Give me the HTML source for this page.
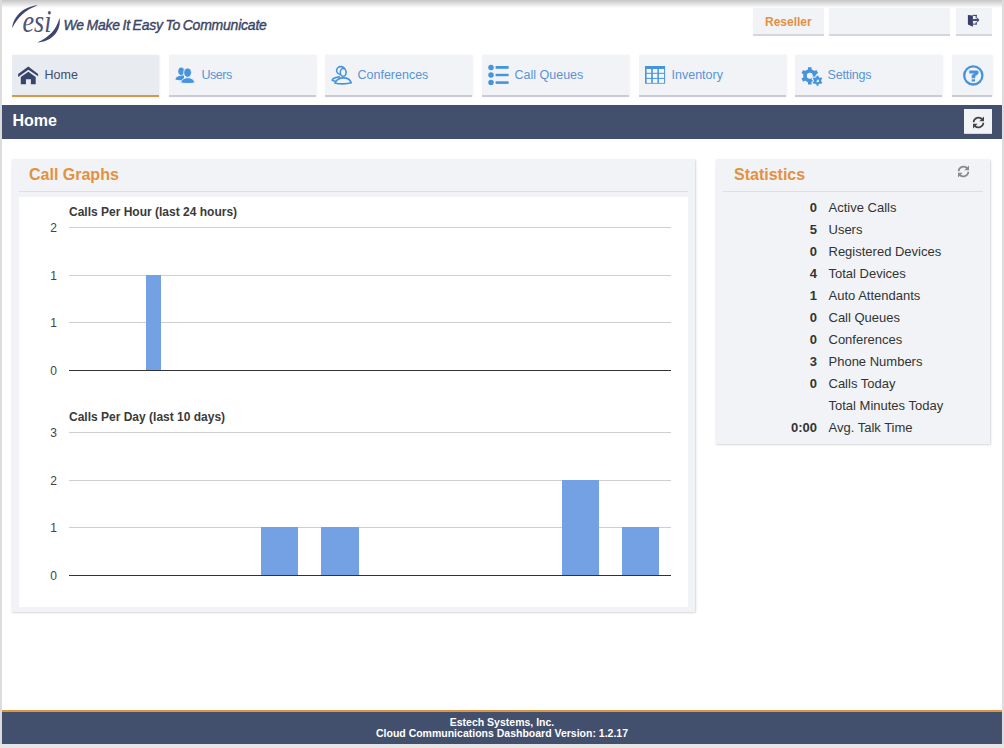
<!DOCTYPE html>
<html><head><meta charset="utf-8">
<style>
*{box-sizing:border-box;margin:0;padding:0}
html,body{width:1004px;height:748px;overflow:hidden;background:#fff;font-family:"Liberation Sans",sans-serif}
.a{position:absolute}
.t{position:absolute;white-space:nowrap;line-height:1}
/* frame */
#ftop{left:0;top:0;width:1004px;height:8px;background:linear-gradient(#c6c6c6,#fff)}
#fl{left:0;top:0;width:2px;height:748px;background:#dcdcdc}
#fr{left:1002px;top:0;width:2px;height:748px;background:#dcdcdc}
#fb{left:0;top:744px;width:1004px;height:4px;background:#e6e6e6}
/* top buttons */
.tb{position:absolute;top:8px;height:28px;background:#f1f3f6;border-bottom:2px solid #d3d6da}
/* nav */
.nv{position:absolute;top:55px;width:147px;height:42px;background:#f1f3f6;border-bottom:2px solid #c9ccd2;box-shadow:1px 0 2px rgba(0,0,0,.06)}
.nv.on{background:#e8ebf0;border-bottom-color:#d8984c}
.nv .t{left:32.5px;top:14px;font-size:12.5px;color:#5893d8}
.nv.on .t{color:#434c69}
.nv svg{position:absolute}
/* bar */
#hbar{left:2px;top:105px;width:1000px;height:34px;background:#42506e}
/* panels */
.pn{position:absolute;background:#f1f3f6;box-shadow:0.5px 1px 2px rgba(0,0,0,.16);border-radius:1px}
.ttl{position:absolute;font-weight:bold;font-size:16px;color:#e39140;white-space:nowrap;line-height:1}
.sep{position:absolute;height:1px;background:#dcdfe3}
.gl{position:absolute;left:69px;width:602px;height:1px;background:#cfcfcf}
.bl{position:absolute;left:69px;width:602px;height:1px;background:#333}
.yl{position:absolute;width:20px;text-align:right;font-size:12px;color:#444;line-height:1;left:37px}
.bar{position:absolute;background:#74a1e3}
.ct{position:absolute;left:69px;font-weight:bold;font-size:12px;color:#3a3a3a;white-space:nowrap;line-height:1}
.sr{position:absolute;left:716px;width:275px;height:22px;font-size:13px;color:#333;line-height:1}
.sr b{position:absolute;right:174px;top:0;font-weight:bold}
.sr span{position:absolute;left:112.5px;top:0;white-space:nowrap}
#foot{left:2px;top:710px;width:1000px;height:34px;background:#42506e;border-top:2px solid #e0963c}
#foot .t{left:0;width:1000px;text-align:center;color:#fff;font-weight:bold;font-size:10.5px}
</style></head><body>
<div id="ftop" class="a"></div>
<div id="fl" class="a"></div>
<div id="fr" class="a"></div>
<div id="fb" class="a"></div>

<!-- logo -->
<svg class="a" style="left:8px;top:2px" width="66" height="44" viewBox="0 0 66 44">
  <path d="M4.2 26 C 5 16, 14 4.5, 29.9 3.3 C 17 8, 9.5 15.5, 4.2 26 Z" fill="#3c4670"/>
  <path d="M51.4 15.8 C 54 29, 43 40, 29.3 40.6 C 40.5 35.5, 49 27.5, 51.4 15.8 Z" fill="#3c4670"/>
  <text x="14.5" y="29.6" font-family="Liberation Serif" font-style="italic" font-size="32" fill="#4a5478" textLength="29" lengthAdjust="spacingAndGlyphs">esi</text>
</svg>
<div class="t" style="left:63.5px;top:18px;font-size:14px;font-style:italic;color:#3c4668;letter-spacing:-0.22px;word-spacing:-1px;-webkit-text-stroke:0.4px #3c4668">We Make It Easy To Communicate</div>

<!-- top buttons -->
<div class="tb" style="left:753px;width:71px"><div class="t" style="left:12px;top:8px;font-size:12px;font-weight:bold;color:#e39140">Reseller</div></div>
<div class="tb" style="left:829px;width:121px"></div>
<div class="tb" style="left:956px;width:36px">
  <svg class="a" style="left:11px;top:6px" width="14" height="14" viewBox="0 0 14 14">
    <g fill="#383f6c">
    <path d="M0.9 0.9 L5.9 1.6 V12.7 L0.9 10.6 Z"/>
    <rect x="5.9" y="0.9" width="3.8" height="1"/>
    <rect x="8.7" y="0.9" width="1" height="3.6"/>
    <rect x="8.7" y="7.9" width="1" height="2.6"/>
    <rect x="5.9" y="9.6" width="3.8" height="1"/>
    <rect x="5.9" y="5.1" width="4.8" height="1.8"/>
    <path d="M10.2 3.6 L12.4 6 L10.2 8.4 Z"/>
    </g>
  </svg>
</div>

<!-- nav -->
<div class="nv on" style="left:12px">
  <svg style="left:6px;top:10.5px" width="21" height="19" viewBox="0 0 21 19">
    <path d="M0.1 8.1 L10.35 0.55 L20.1 8.1 L20.1 10.3 L10.35 3.75 L0.1 11 Z" fill="#38456b"/>
    <path d="M2.8 11 L10.35 5.7 L17.7 11 V18.2 H12.9 V13.2 H7.95 V18.2 H2.8 Z" fill="#38456b"/>
  </svg>
  <div class="t">Home</div>
</div>
<div class="nv" style="left:169px">
  <svg style="left:6px;top:5px" width="22" height="26" viewBox="0 0 22 26">
    <g fill="#4794de" stroke="#f1f3f6" stroke-width="1">
    <ellipse cx="6.2" cy="11.3" rx="2.9" ry="3.8" stroke="none"/>
    <path d="M0.4 19.2 C 0.8 16.6, 4 15.4, 9 15.4 V20.2 C 5 20.4, 1.2 20.2, 0.4 19.2 Z" stroke="none"/>
    <ellipse cx="12.6" cy="12.6" rx="3.9" ry="4.7"/>
    <path d="M5.3 22.7 C 6.5 19.3, 9.8 17.6, 12.8 17.6 C 15.8 17.6, 19 19.3, 20.2 22.7 C 17 23.8, 8.5 23.8, 5.3 22.7 Z"/>
    </g>
  </svg>
  <div class="t" style="letter-spacing:-0.5px">Users</div>
</div>
<div class="nv" style="left:325px">
  <svg style="left:6px;top:5px" width="22" height="26" viewBox="0 0 22 26">
    <g stroke="#4794de" stroke-width="1.6">
    <ellipse cx="9.9" cy="10.5" rx="4.3" ry="3.9" fill="none"/>
    <ellipse cx="12.2" cy="12.4" rx="2.9" ry="3.9" fill="#f1f3f6"/>
    <path d="M9 16.9 C 5 17.2, 1.8 18.4, 1.2 20.1 C 2 20.8, 3.5 21.3, 4.8 21.3" fill="none"/>
    <path d="M4 23 C 5.5 19.5, 9 17.9, 12.3 17.9 C 15.8 17.9, 19.2 19.8, 20.2 22.8 C 16 24.2, 8 24.2, 4 23 Z" fill="#f1f3f6"/>
    </g>
  </svg>
  <div class="t">Conferences</div>
</div>
<div class="nv" style="left:482px">
  <svg style="left:5px;top:9px" width="22" height="21" viewBox="0 0 22 21">
    <g fill="#4794de">
    <circle cx="4" cy="3.4" r="2.75"/>
    <circle cx="4" cy="11" r="2.75"/>
    <circle cx="4" cy="18.5" r="2.75"/>
    <rect x="8.6" y="2" width="13" height="2.8"/>
    <rect x="8.6" y="9.8" width="13" height="2.4"/>
    <rect x="8.6" y="17.3" width="13" height="2.6"/>
    </g>
  </svg>
  <div class="t">Call Queues</div>
</div>
<div class="nv" style="left:639px">
  <svg style="left:6px;top:11px" width="21" height="18" viewBox="0 0 21 18">
    <rect x="0" y="0" width="20.1" height="17.7" fill="#4794de"/>
    <g fill="#f3f6fa">
    <rect x="1.6" y="3" width="4.6" height="3.8"/><rect x="7.8" y="3" width="4.6" height="3.8"/><rect x="13.9" y="3" width="5.2" height="3.8"/>
    <rect x="1.6" y="7.8" width="4.6" height="4.1"/><rect x="7.8" y="7.8" width="4.6" height="4.1"/><rect x="13.9" y="7.8" width="5.2" height="4.1"/>
    <rect x="1.6" y="12.9" width="4.6" height="4"/><rect x="7.8" y="12.9" width="4.6" height="4"/><rect x="13.9" y="12.9" width="5.2" height="4"/>
    </g>
  </svg>
  <div class="t">Inventory</div>
</div>
<div class="nv" style="left:795px">
  <svg style="left:6px;top:11px" width="24" height="22" viewBox="0 0 24 22">
    <path fill-rule="evenodd" fill="#4794de" d="M7.00 3.45 L7.00 1.19 L10.60 1.19 L10.60 3.45 L11.37 3.72 L12.10 4.08 L12.78 4.54 L13.40 5.07 L15.36 3.93 L17.16 7.05 L15.20 8.18 L15.35 8.99 L15.40 9.80 L15.35 10.61 L15.20 11.42 L17.16 12.55 L15.36 15.67 L13.40 14.53 L12.78 15.06 L12.10 15.52 L11.37 15.88 L10.60 16.15 L10.60 18.41 L7.00 18.41 L7.00 16.15 L6.23 15.88 L5.50 15.52 L4.82 15.06 L4.20 14.53 L2.24 15.67 L0.44 12.55 L2.40 11.42 L2.25 10.61 L2.20 9.80 L2.25 8.99 L2.40 8.18 L0.44 7.05 L2.24 3.93 L4.20 5.07 L4.82 4.54 L5.50 4.08 L6.23 3.72 Z M11.80 9.80 A3.0 3.0 0 1 0 5.80 9.80 A3.0 3.0 0 1 0 11.80 9.80 Z"/>
    <path fill="none" stroke="#f1f3f6" stroke-width="2" stroke-linejoin="round" d="M15.45 11.15 L15.45 9.71 L17.55 9.71 L17.55 11.15 L17.96 11.30 L18.35 11.50 L18.71 11.74 L19.05 12.02 L20.30 11.30 L21.35 13.11 L20.10 13.84 L20.17 14.26 L20.20 14.70 L20.17 15.14 L20.10 15.56 L21.35 16.29 L20.30 18.10 L19.05 17.38 L18.71 17.66 L18.35 17.90 L17.96 18.10 L17.55 18.25 L17.55 19.69 L15.45 19.69 L15.45 18.25 L15.04 18.10 L14.65 17.90 L14.29 17.66 L13.95 17.38 L12.70 18.10 L11.65 16.29 L12.90 15.56 L12.83 15.14 L12.80 14.70 L12.83 14.26 L12.90 13.84 L11.65 13.11 L12.70 11.30 L13.95 12.02 L14.29 11.74 L14.65 11.50 L15.04 11.30 Z"/>
    <path fill-rule="evenodd" fill="#4794de" d="M15.45 11.15 L15.45 9.71 L17.55 9.71 L17.55 11.15 L17.96 11.30 L18.35 11.50 L18.71 11.74 L19.05 12.02 L20.30 11.30 L21.35 13.11 L20.10 13.84 L20.17 14.26 L20.20 14.70 L20.17 15.14 L20.10 15.56 L21.35 16.29 L20.30 18.10 L19.05 17.38 L18.71 17.66 L18.35 17.90 L17.96 18.10 L17.55 18.25 L17.55 19.69 L15.45 19.69 L15.45 18.25 L15.04 18.10 L14.65 17.90 L14.29 17.66 L13.95 17.38 L12.70 18.10 L11.65 16.29 L12.90 15.56 L12.83 15.14 L12.80 14.70 L12.83 14.26 L12.90 13.84 L11.65 13.11 L12.70 11.30 L13.95 12.02 L14.29 11.74 L14.65 11.50 L15.04 11.30 Z M18.05 14.70 A1.55 1.55 0 1 0 14.95 14.70 A1.55 1.55 0 1 0 18.05 14.70 Z"/>
  </svg>
  <div class="t" style="letter-spacing:-0.15px">Settings</div>
</div>
<div class="nv" style="left:952px;width:40px">
  <svg style="left:10px;top:9.5px" width="23" height="22" viewBox="0 0 23 22">
    <circle cx="11.3" cy="10.4" r="9.1" stroke="#4794de" stroke-width="2.3" fill="none"/>
    <path d="M7.3 5.4 H14.8 C16.2 5.4, 16.7 6.3, 16.6 7.4 C16.5 8.8, 15.6 9.7, 13.3 11 V13.2 H9.7 V10 L12.6 8.5 H7.3 Z" fill="#4794de"/>
    <rect x="9.7" y="14.3" width="3.3" height="2.2" fill="#4794de"/>
  </svg>
</div>

<!-- header bar -->
<div id="hbar" class="a">
  <div class="t" style="left:10.5px;top:7.5px;font-size:16px;font-weight:bold;color:#fff">Home</div>
  <div class="a" style="left:962px;top:4px;width:28px;height:25px;background:#f1f3f6;border-bottom:1px solid #d5d8dc">
    <svg class="a" style="left:8px;top:6.5px" width="13" height="13" viewBox="0 0 13 13">
      <path d="M1.6 6.2 A4.9 4.9 0 0 1 10.3 3.4" stroke="#444" stroke-width="1.7" fill="none"/>
      <path d="M12 0.6 V5.3 H7.3 Z" fill="#444"/>
      <path d="M11.4 6.8 A4.9 4.9 0 0 1 2.7 9.6" stroke="#444" stroke-width="1.7" fill="none"/>
      <path d="M1 12.4 V7.7 H5.7 Z" fill="#444"/>
    </svg>
  </div>
</div>

<!-- Call graphs panel -->
<div class="pn" style="left:12px;top:159px;width:683px;height:453px"></div>
<div class="ttl" style="left:29px;top:167px">Call Graphs</div>
<div class="sep" style="left:19px;top:191px;width:669px"></div>
<div class="a" style="left:19px;top:197px;width:669px;height:410px;background:#fff"></div>

<div class="ct" style="left:69px;top:206px">Calls Per Hour (last 24 hours)</div>
<div class="gl" style="top:227px"></div>
<div class="gl" style="top:275px"></div>
<div class="gl" style="top:322px"></div>
<div class="bar" style="left:146px;top:275px;width:15px;height:95px"></div>
<div class="bl" style="top:370px"></div>
<div class="yl" style="top:222px">2</div>
<div class="yl" style="top:270px">1</div>
<div class="yl" style="top:317px">1</div>
<div class="yl" style="top:365px">0</div>

<div class="ct" style="left:69px;top:411px">Calls Per Day (last 10 days)</div>
<div class="gl" style="top:432px"></div>
<div class="gl" style="top:480px"></div>
<div class="gl" style="top:527px"></div>
<div class="bar" style="left:261px;top:527px;width:37px;height:48px"></div>
<div class="bar" style="left:321px;top:527px;width:38px;height:48px"></div>
<div class="bar" style="left:562px;top:480px;width:37px;height:95px"></div>
<div class="bar" style="left:622px;top:527px;width:37px;height:48px"></div>
<div class="bl" style="top:575px"></div>
<div class="yl" style="top:427px">3</div>
<div class="yl" style="top:475px">2</div>
<div class="yl" style="top:522px">1</div>
<div class="yl" style="top:570px">0</div>

<!-- Statistics panel -->
<div class="pn" style="left:716px;top:159px;width:274px;height:284.5px"></div>
<div class="ttl" style="left:734px;top:167px">Statistics</div>
<svg class="a" style="left:956.5px;top:165px" width="13" height="13" viewBox="0 0 13 13">
  <path d="M1.6 6.2 A4.9 4.9 0 0 1 10.3 3.4" stroke="#8a8a8a" stroke-width="1.7" fill="none"/>
  <path d="M12 0.6 V5.3 H7.3 Z" fill="#8a8a8a"/>
  <path d="M11.4 6.8 A4.9 4.9 0 0 1 2.7 9.6" stroke="#8a8a8a" stroke-width="1.7" fill="none"/>
  <path d="M1 12.4 V7.7 H5.7 Z" fill="#8a8a8a"/>
</svg>
<div class="sep" style="left:723px;top:191px;width:260px"></div>

<div class="sr" style="top:201px"><b>0</b><span>Active Calls</span></div>
<div class="sr" style="top:223px"><b>5</b><span>Users</span></div>
<div class="sr" style="top:245px"><b>0</b><span>Registered Devices</span></div>
<div class="sr" style="top:267px"><b>4</b><span>Total Devices</span></div>
<div class="sr" style="top:289px"><b>1</b><span>Auto Attendants</span></div>
<div class="sr" style="top:311px"><b>0</b><span>Call Queues</span></div>
<div class="sr" style="top:333px"><b>0</b><span>Conferences</span></div>
<div class="sr" style="top:355px"><b>3</b><span>Phone Numbers</span></div>
<div class="sr" style="top:377px"><b>0</b><span>Calls Today</span></div>
<div class="sr" style="top:399px"><b></b><span>Total Minutes Today</span></div>
<div class="sr" style="top:421px"><b>0:00</b><span>Avg. Talk Time</span></div>

<!-- footer -->
<div id="foot" class="a">
  <div class="t" style="top:5px">Estech Systems, Inc.</div>
  <div class="t" style="top:16px">Cloud Communications Dashboard Version: 1.2.17</div>
</div>
</body></html>
